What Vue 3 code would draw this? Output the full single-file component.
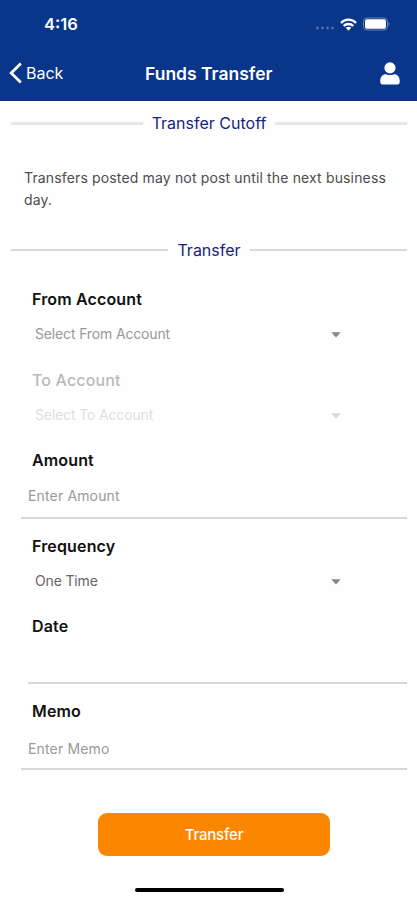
<template>
  <div class="screen">
    <header class="header">
      <div class="status-bar">
        <span class="time">4:16</span>
        <div class="status-icons">
          <svg class="signal" width="20" height="4" viewBox="0 0 20 4">
            <circle v-for="n in 4" :key="n" :cx="n * 5 - 2.5" cy="2" r="1.4" fill="#5270b0" />
          </svg>
          <svg class="wifi" width="17" height="13" viewBox="0 0 17 13">
            <g fill="none" stroke="#fff" stroke-width="2.3">
              <path d="M1 5 C5 0.6 12 0.6 16 5" />
              <path d="M3.7 8 C6.2 5.3 10.8 5.3 13.3 8" />
            </g>
            <path d="M5.7 9.8 C7.2 8.3 9.8 8.3 11.3 9.8 L8.5 12.8 Z" fill="#fff" />
          </svg>
          <svg class="battery" width="28" height="14" viewBox="0 0 28 14">
            <rect x="0.5" y="1" width="24" height="12" rx="3.5" fill="none" stroke="#6a84bd" />
            <rect x="2" y="2.2" width="21" height="9.6" rx="2" fill="#fff" />
            <path d="M25.6 5 Q27.6 7 25.6 9 Z" fill="#6a84bd" />
          </svg>
        </div>
      </div>
      <nav class="nav">
        <button class="back-btn">
          <svg width="13" height="22" viewBox="0 0 13 22">
            <path d="M11.8 1.4 L2.2 11 L11.8 20.6" fill="none" stroke="#fff" stroke-width="2.8" />
          </svg>
          <span>Back</span>
        </button>
        <h1>Funds Transfer</h1>
        <button class="user-btn">
          <svg width="20" height="23" viewBox="0 0 20 23">
            <circle cx="10" cy="5.9" r="5.6" fill="#fff" />
            <path d="M0.3 20.2 V18.5 C0.3 14.8 2.6 12.2 6 12.2 C8.5 13.4 11.5 13.4 14 12.2 C17.4 12.2 19.7 14.8 19.7 18.5 V20.2 Q19.7 22.5 17.4 22.5 H2.6 Q0.3 22.5 0.3 20.2 Z" fill="#fff" />
          </svg>
        </button>
      </nav>
    </header>

    <div class="divider cutoff">
      <h2>Transfer Cutoff</h2>
    </div>
    <p class="note">Transfers posted may not post until the next business day.</p>
    <div class="divider transfer">
      <h2>Transfer</h2>
    </div>

    <form class="form" @submit.prevent>
      <div
        v-for="field in fields"
        :key="field.name"
        class="field"
        :class="[field.name, field.type, { disabled: field.disabled }]"
      >
        <label>{{ field.label }}</label>
        <div class="control">
          <span class="value" :class="{ filled: field.filled }">{{ field.text }}</span>
          <svg v-if="field.type === 'select'" class="caret" width="10" height="6" viewBox="0 0 10 6">
            <path d="M0.3 0.3 H9.7 L5 5.4 Z" fill="currentColor" />
          </svg>
        </div>
      </div>
      <button class="submit-btn">Transfer</button>
    </form>

    <div class="home-indicator"></div>
  </div>
</template>

<script setup>
const fields = [
  { name: 'from', label: 'From Account', text: 'Select From Account', type: 'select' },
  { name: 'to', label: 'To Account', text: 'Select To Account', type: 'select', disabled: true },
  { name: 'amount', label: 'Amount', text: 'Enter Amount', type: 'input' },
  { name: 'frequency', label: 'Frequency', text: 'One Time', type: 'select', filled: true },
  { name: 'date', label: 'Date', text: '', type: 'input' },
  { name: 'memo', label: 'Memo', text: 'Enter Memo', type: 'input' }
]
</script>

<style>
body {
  margin: 0;
  background: #fefefe;
}
</style>

<style scoped>
.screen {
  height: 900px;
  box-sizing: border-box;
  overflow: hidden;
  display: flex;
  flex-direction: column;
  background: #fefefe;
  font-family: Inter, 'Liberation Sans', sans-serif;
}

button {
  padding: 0;
  border: none;
  background: none;
  color: #fff;
  font-family: inherit;
}

.header {
  height: 101px;
  box-sizing: border-box;
  flex-shrink: 0;
  background: #09368b;
  border-bottom: 1px solid #1f2480;
  color: #fff;
}

.status-bar {
  height: 48px;
  padding: 0 26px 0 44px;
  display: flex;
  align-items: center;
  justify-content: space-between;
}

.time {
  font-size: 16.5px;
  font-weight: 600;
}

.status-icons {
  display: flex;
  align-items: center;
}

.signal {
  margin: 8px 5px 0 0;
}

.wifi {
  margin-right: 6px;
}

.nav {
  height: 50px;
  padding: 0 17px 0 9px;
  display: grid;
  grid-template-columns: 136px 1fr auto;
  align-items: center;
}

.back-btn {
  display: flex;
  align-items: center;
  gap: 4px;
  font-size: 16px;
}

.nav h1 {
  margin: 0;
  font-size: 17.5px;
  font-weight: 600;
}

.user-btn {
  height: 23px;
}

.divider {
  height: 46px;
  margin: 0 10px 0 11px;
  flex-shrink: 0;
  display: flex;
  align-items: center;
  gap: 9px;
}

.divider::before,
.divider::after {
  content: '';
  flex: 1;
  height: 2px;
  background: #d8d9da;
}

.divider.cutoff {
  height: 45px;
}

.divider.cutoff::before,
.divider.cutoff::after {
  height: 3px;
  background: #e4e6e8;
}

.divider h2 {
  margin: 0;
  font-size: 16px;
  font-weight: 400;
  color: #18247f;
}

.divider.cutoff h2 {
  padding-bottom: 2px;
}

.note {
  margin: 21px 24px 16px;
  font-size: 14px;
  line-height: 22px;
  letter-spacing: 0.15px;
  color: #4c4c4c;
}

.form {
  display: flex;
  flex-direction: column;
  padding: 14px 10px 0 21px;
}

.field label {
  display: block;
  height: 24px;
  padding-left: 11px;
  line-height: 24px;
  font-size: 16px;
  font-weight: 600;
  letter-spacing: 0.15px;
  color: #111;
}

.control {
  height: 29px;
  margin-top: 8px;
  padding-left: 7px;
  display: flex;
  align-items: center;
  justify-content: space-between;
  font-size: 14px;
  color: #999;
}

.select .control {
  padding: 0 66px 0 14px;
}

.select .value {
  letter-spacing: -0.15px;
}

.value.filled {
  color: #666;
}

.caret {
  margin-top: 3px;
  color: #858585;
}

.select {
  margin-bottom: 19px;
}

.select.from {
  margin-bottom: 20px;
}

.disabled label {
  color: #bababa;
  font-weight: 500;
}

.disabled .control {
  color: #dedede;
}

.disabled .caret {
  color: #d5d5d5;
}

.input .control {
  height: 30px;
  padding-bottom: 7px;
  border-bottom: 2px solid #d8d8d8;
  margin-bottom: 15px;
  letter-spacing: 0.15px;
}

.date .control {
  margin-left: 7px;
  height: 29px;
}

.memo .control {
  height: 34px;
  padding-bottom: 3px;
}

.submit-btn {
  width: 232px;
  height: 43px;
  margin: 28px 0 0 77px;
  border-radius: 9px;
  background: #fc8600;
  font-size: 15px;
  font-weight: 500;
  letter-spacing: -0.2px;
}

.home-indicator {
  width: 149px;
  height: 4px;
  margin: auto auto 8px;
  transform: translateX(1px);
  flex-shrink: 0;
  border-radius: 2px;
  background: #000;
}
</style>
